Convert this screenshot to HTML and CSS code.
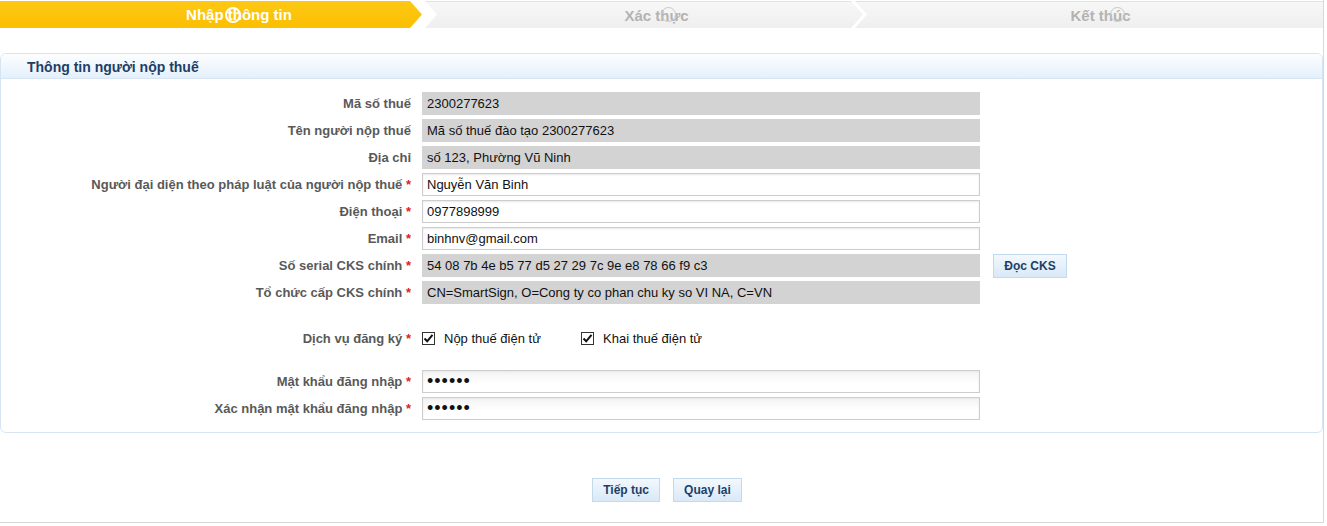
FILE: index.html
```html
<!DOCTYPE html>
<html lang="vi">
<head>
    <meta charset="UTF-8">
    <title>Đăng ký - Nhập thông tin</title>
    <link rel="stylesheet" href="styles.css">
</head>
<body>
    <div class="page">
        <div class="steps">
            <div class="step step-first active">
                <span class="step-text">Nhập thông tin<i class="ring ring-1"></i></span>
            </div>
            <div class="step step-mid">
                <span class="step-text">Xác thực<i class="ring ring-2"></i></span>
            </div>
            <div class="step step-last">
                <span class="step-text">Kết thúc<i class="ring ring-3"></i></span>
            </div>
        </div>

        <div class="panel">
            <div class="panel-head">Thông tin người nộp thuế</div>
            <div class="panel-body">
                <div class="form-row">
                    <label>Mã số thuế</label>
                    <input class="field readonly" type="text" value="2300277623" readonly>
                </div>
                <div class="form-row">
                    <label>Tên người nộp thuế</label>
                    <input class="field readonly" type="text" value="Mã số thuế đào tạo 2300277623" readonly>
                </div>
                <div class="form-row">
                    <label>Địa chỉ</label>
                    <input class="field readonly" type="text" value="số 123, Phường Vũ Ninh" readonly>
                </div>
                <div class="form-row">
                    <label>Người đại diện theo pháp luật của người nộp thuế <span class="req">*</span></label>
                    <input class="field" type="text" value="Nguyễn Văn Binh">
                </div>
                <div class="form-row">
                    <label>Điện thoại <span class="req">*</span></label>
                    <input class="field" type="text" value="0977898999">
                </div>
                <div class="form-row">
                    <label>Email <span class="req">*</span></label>
                    <input class="field" type="text" value="binhnv@gmail.com">
                </div>
                <div class="form-row">
                    <label>Số serial CKS chính <span class="req">*</span></label>
                    <input class="field readonly" type="text" value="54 08 7b 4e b5 77 d5 27 29 7c 9e e8 78 66 f9 c3" readonly>
                    <button class="btn btn-read" type="button">Đọc CKS</button>
                </div>
                <div class="form-row">
                    <label>Tổ chức cấp CKS chính <span class="req">*</span></label>
                    <input class="field readonly" type="text" value="CN=SmartSign, O=Cong ty co phan chu ky so VI NA, C=VN" readonly>
                </div>

                <div class="form-row services">
                    <label>Dịch vụ đăng ký <span class="req">*</span></label>
                    <div class="checks">
                        <span class="check">
                            <span class="box"><svg width="11" height="11" viewBox="0 0 11 11"><path d="M1.5 5.5 L4.2 8.3 L9.5 1.8" fill="none" stroke="#111" stroke-width="2"/></svg></span>
                            Nộp thuế điện tử
                        </span>
                        <span class="check">
                            <span class="box"><svg width="11" height="11" viewBox="0 0 11 11"><path d="M1.5 5.5 L4.2 8.3 L9.5 1.8" fill="none" stroke="#111" stroke-width="2"/></svg></span>
                            Khai thuế điện tử
                        </span>
                    </div>
                </div>

                <div class="form-row pass-first">
                    <label>Mật khẩu đăng nhập <span class="req">*</span></label>
                    <input class="field pass" type="password" value="123456">
                </div>
                <div class="form-row">
                    <label>Xác nhận mật khẩu đăng nhập <span class="req">*</span></label>
                    <input class="field pass" type="password" value="123456">
                </div>
            </div>
        </div>

        <div class="actions">
            <button class="btn" type="button">Tiếp tục</button>
            <button class="btn" type="button">Quay lại</button>
        </div>
    </div>
</body>
</html>
```

FILE: styles.css
```css
body {
    margin: 0;
    background-color: #fff;
    font-family: "Liberation Sans", Arial, sans-serif;
    font-size: 13px;
}

.page {
    width: 1323px;
    height: 522px;
    border-right: 1px solid #d8d8d8;
    border-bottom: 1px solid #d8d8d8;
}

/* steps bar */
.steps {
    display: flex;
    height: 28px;
}

.step {
    height: 27px;
    margin-top: 1px;
    display: flex;
    align-items: center;
    justify-content: center;
    box-sizing: border-box;
    font-size: 15px;
    font-weight: bold;
    color: #b3b3b3;
    background: linear-gradient(#f7f7f7, #efefef);
}

.step-first {
    width: 422px;
    padding-left: 56px;
    clip-path: polygon(0 0, calc(100% - 12px) 0, 100% 50%, calc(100% - 12px) 100%, 0 100%);
}

.step-first.active {
    background: linear-gradient(#fdc816, #fbbf00);
    color: #fff;
}

.step-mid {
    width: 438px;
    margin-left: 3px;
    padding-left: 25px;
    border-top: 1px solid #e2e2e2;
    clip-path: polygon(0 0, calc(100% - 12px) 0, 100% 50%, calc(100% - 12px) 100%, 0 100%, 12px 50%);
}

.step-last {
    flex: 1;
    margin-left: -8px;
    padding-left: 23px;
    border-top: 1px solid #e2e2e2;
    clip-path: polygon(0 0, 100% 0, 100% 100%, 0 100%, 12px 50%);
}

.step-text {
    position: relative;
}

.ring {
    position: absolute;
    top: 50%;
    width: 13px;
    height: 13px;
    margin-top: -8px;
    border-radius: 50%;
    border: 1px solid #c8c8c8;
}

.ring-1 {
    left: 39px;
    border: 2px solid #fff;
    width: 12px;
    height: 12px;
}

.ring-2 {
    left: 37px;
}

.ring-3 {
    left: 39px;
}

/* panel */
.panel {
    margin-top: 25px;
    border: 1px solid #d6e5f1;
    border-radius: 6px;
    overflow: hidden;
}

.panel-head {
    height: 24px;
    line-height: 26px;
    padding-left: 26px;
    font-size: 14px;
    font-weight: bold;
    color: #1d3f66;
    background: linear-gradient(#fdfeff, #e4f0fc);
    border-bottom: 1px solid #d6e5f1;
}

.panel-body {
    padding: 11px 0 10px;
}

.form-row {
    display: flex;
    align-items: center;
    height: 27px;
}

.form-row > label {
    width: 410px;
    padding-right: 11px;
    text-align: right;
    font-weight: bold;
    color: #595959;
    white-space: nowrap;
}

.req {
    color: #d22;
}

.field {
    width: 558px;
    height: 23px;
    box-sizing: border-box;
    padding: 0 4px;
    border: 1px solid #cdcdcd;
    font-family: "Liberation Sans", Arial, sans-serif;
    font-size: 13px;
    color: #111;
    background: #fff;
    box-shadow: inset 0 1px 2px #e8e8e8;
}

.field.readonly {
    border-color: #d3d3d3;
    background: #d3d3d3;
    box-shadow: none;
}

.field.pass {
    font-size: 18px;
    letter-spacing: 1px;
    background: linear-gradient(#f3f3f3, #fff 60%);
}

.btn {
    height: 24px;
    padding: 0 10px;
    border: 1px solid #c3daee;
    background: linear-gradient(#f2f8fe, #d9e9f8);
    font-family: "Liberation Sans", Arial, sans-serif;
    font-size: 12px;
    font-weight: bold;
    color: #1d3f66;
    cursor: pointer;
}

.btn-read {
    margin-left: 13px;
    width: 74px;
}

.services {
    margin-top: 19px;
}

.checks {
    display: flex;
}

.check {
    display: flex;
    align-items: center;
    width: 159px;
    color: #111;
}

.box {
    display: flex;
    align-items: center;
    justify-content: center;
    width: 11px;
    height: 11px;
    margin-right: 9px;
    border: 1px solid #333;
    background: #fff;
}

.pass-first {
    margin-top: 16px;
}

.actions {
    display: flex;
    justify-content: center;
    gap: 13px;
    margin-top: 45px;
    padding-left: 11px;
}
```
